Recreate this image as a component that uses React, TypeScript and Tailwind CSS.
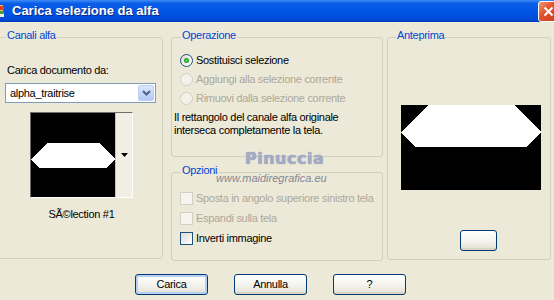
import React from "react";

function GroupBox({
  title,
  legendClass,
  className,
  children,
}: {
  title: string;
  legendClass: string;
  className: string;
  children?: React.ReactNode;
}) {
  return (
    <div className={`relative border border-[#d0d0bf] rounded-[3px] ${className}`}>
      <span className={`absolute top-[-9px] px-[1px] bg-[#ece9d8] text-[#0046d5] leading-[13px] whitespace-nowrap ${legendClass}`}>
        {title}
      </span>
      {children}
    </div>
  );
}

function Radio({ checked, disabled, label }: { checked?: boolean; disabled?: boolean; label: string }) {
  return (
    <div className="h-[19px] flex items-center gap-[3px] whitespace-nowrap">
      <span
        className={`w-[13px] h-[13px] shrink-0 rounded-full border flex items-center justify-center ${
          disabled
            ? "border-[#d3d0c3] bg-[#f3f2ea]"
            : "border-[#1c5180] bg-gradient-to-br from-[#dcdcd6] to-white"
        }`}
      >
        {checked && (
          <span className="w-[5px] h-[5px] rounded-full bg-[radial-gradient(circle,#5ee35e_0%,#21a121_60%,#17801a_100%)]" />
        )}
      </span>
      <span className={disabled ? "text-[#aca899]" : "text-black"}>{label}</span>
    </div>
  );
}

function Check({ disabled, label }: { disabled?: boolean; label: string }) {
  return (
    <div className="h-[20px] flex items-center gap-[3px] whitespace-nowrap">
      <span
        className={`w-[13px] h-[13px] shrink-0 border ${
          disabled
            ? "border-[#d3d0c3] bg-[#f5f4ee]"
            : "border-[#1c5180] bg-gradient-to-br from-[#dcdcd6] to-white"
        }`}
      />
      <span className={disabled ? "text-[#aca899]" : "text-black"}>{label}</span>
    </div>
  );
}

function XpButton({
  label,
  isDefault,
  className,
}: {
  label: string;
  isDefault?: boolean;
  className: string;
}) {
  return (
    <div
      className={`h-[21px] rounded-[3px] border border-[#003c74] bg-gradient-to-b from-white via-[#f5f4ef] to-[#e2dfd3] flex items-center justify-center text-black ${
        isDefault ? "shadow-[inset_0_0_0_2px_#b8cff5]" : "shadow-[inset_0_-2px_0_0_#d8d4c6]"
      } ${className}`}
    >
      {label}
    </div>
  );
}

export default function App() {
  return (
    <div className="w-[554px] h-[300px] overflow-hidden bg-[#ece9d8] flex flex-col text-[11px] leading-[13px] tracking-[-0.3px] font-['Liberation_Sans',Arial,sans-serif] relative">
      {/* Title bar */}
      <div className="h-[22px] shrink-0 flex items-center tracking-normal bg-[linear-gradient(to_bottom,#3d8ef7_0%,#0a5ee8_15%,#0054e3_60%,#0049d4_90%,#003db5_100%)]">
        <svg width="14" height="16" viewBox="0 0 14 16" className="ml-[-9px] shrink-0">
          <rect x="2" y="2" width="10" height="12" fill="#f0c070" />
          <rect x="9" y="3" width="4" height="4" fill="#e04020" />
          <rect x="9" y="8" width="4" height="3" fill="#40a040" />
          <rect x="9" y="11" width="4" height="3" fill="#f8f0d0" />
        </svg>
        <span className="ml-[7px] text-white font-bold text-[13px] leading-[16px] [text-shadow:1px_1px_0_#0a2a8a]">
          Carica selezione da alfa
        </span>
        <div className="ml-auto mr-[-5px] w-[21px] h-[21px] rounded-[3px] border border-white bg-[linear-gradient(135deg,#f09a80_0%,#e2552f_40%,#c8391a_100%)] flex items-center justify-center">
          <svg width="11" height="11" viewBox="0 0 11 11">
            <path d="M1.5 1.5 L9.5 9.5 M9.5 1.5 L1.5 9.5" stroke="white" strokeWidth="2" />
          </svg>
        </div>
      </div>

      {/* Body */}
      <div className="h-[238px] shrink-0 flex items-start pt-[15px] ml-[-2px]">
        {/* Canali alfa */}
        <GroupBox title="Canali alfa" legendClass="left-[7px]" className="w-[165px] h-[222px] flex flex-col">
          <div className="mt-[26px] pl-[8px]">Carica documento da:</div>
          <div className="mt-[6px] ml-[6px] w-[151px] h-[20px] border border-[#7f9db9] bg-white flex items-center">
            <span className="pl-[4px] flex-1">alpha_traitrise</span>
            <div className="w-[16px] h-[16px] mr-[1px] rounded-[2px] border border-[#bccef7] bg-gradient-to-b from-[#dde7fd] to-[#b4c8f5] flex items-center justify-center">
              <svg width="9" height="6" viewBox="0 0 9 6">
                <path d="M1 1 L4.5 4.5 L8 1" stroke="#4d6185" strokeWidth="2" fill="none" />
              </svg>
            </div>
          </div>
          <div className="mt-[9px] ml-[31px] w-[103px] h-[86px] border border-t-[#6e6e6e] border-l-[#6e6e6e] border-r-white border-b-white flex bg-black">
            <svg width="84" height="84" viewBox="0 0 84 84" shapeRendering="crispEdges" className="shrink-0">
              <rect width="84" height="84" fill="#000" />
              <polygon points="17,30 68,30 84,46 76,55 8,55 0,46" fill="#fff" />
            </svg>
            <div className="w-[17px] bg-[#f1efe4] border-l border-[#c9c6b8] flex items-center justify-center">
              <svg width="7" height="4" viewBox="0 0 7 4">
                <path d="M0 0 H7 L3.5 4 Z" fill="#000" />
              </svg>
            </div>
          </div>
          <div className="mt-[10px] ml-[31px] w-[103px] text-center">SÃ©lection #1</div>
        </GroupBox>

        {/* Middle column */}
        <div className="ml-[8px] w-[212px] flex flex-col">
          <GroupBox title="Operazione" legendClass="left-[9px]" className="h-[120px] flex flex-col">
            <div className="mt-[13px] pl-[8px] flex flex-col">
              <Radio checked label="Sostituisci selezione" />
              <Radio disabled label="Aggiungi alla selezione corrente" />
              <Radio disabled label="Rimuovi dalla selezione corrente" />
            </div>
            <div className="mt-[3px] pl-[2px] whitespace-nowrap">
              Il rettangolo del canale alfa originale
              <br />
              interseca completamente la tela.
            </div>
          </GroupBox>
          <GroupBox title="Opzioni" legendClass="left-[9px]" className="mt-[15px] h-[89px] flex flex-col">
            <div className="mt-[15px] pl-[8px] flex flex-col">
              <Check disabled label="Sposta in angolo superiore sinistro tela" />
              <Check disabled label="Espandi sulla tela" />
              <Check label="Inverti immagine" />
            </div>
          </GroupBox>
        </div>

        {/* Anteprima */}
        <GroupBox title="Anteprima" legendClass="left-[8px]" className="ml-[4px] w-[164px] h-[223px] flex flex-col">
          <div className="mt-[67px] ml-[13px] w-[140px] h-[85px]">
            <svg width="140" height="85" viewBox="0 0 140 85" shapeRendering="crispEdges">
              <rect width="140" height="85" fill="#000" />
              <polygon points="28,0 114,0 140,27 126,42 14,42 0,27" fill="#fff" />
            </svg>
          </div>
          <XpButton label="" className="mt-[40px] ml-[72px] w-[37px] h-[19px]" />
        </GroupBox>
      </div>

      {/* Buttons */}
      <div className="mt-[14px] flex pl-[135px]">
        <XpButton label="Carica" isDefault className="w-[73px]" />
        <XpButton label="Annulla" className="ml-[26px] w-[73px]" />
        <XpButton label="?" className="ml-[26px] w-[73px]" />
      </div>

      {/* Watermark */}
      <div className="absolute left-[245px] top-[149px] text-[16px] leading-[20px] font-bold font-['DejaVu_Sans',sans-serif] text-[#a4abc6] tracking-[0.5px] [text-shadow:0_0_1px_#7c84a3]">
        Pinuccia
      </div>
      <div className="absolute left-[216px] top-[172px] text-[11px] leading-[13px] tracking-normal text-[#858794] italic">
        www.maidiregrafica.eu
      </div>
    </div>
  );
}
